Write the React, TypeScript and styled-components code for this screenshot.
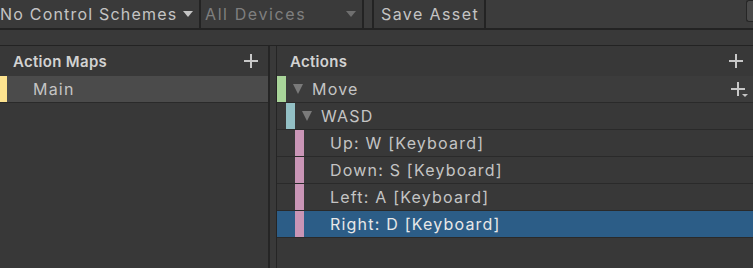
import React from "react";
import styled, { createGlobalStyle } from "styled-components";

const GlobalStyle = createGlobalStyle`
    html, body {
        margin: 0;
        padding: 0;
        background: #383838;
        overflow: hidden;
    }
    body {
        font-family: Inter, "Noto Sans", "DejaVu Sans", sans-serif;
        color: #c4c4c4;
    }
`;

const Window = styled.div`
    display: flex;
    flex-direction: column;
    width: 753px;
    height: 268px;
    background: #383838;
`;

const Toolbar = styled.div`
    display: flex;
    align-items: stretch;
    height: 28px;
    background: #3c3c3c;
    border-bottom: 2px solid #232323;
    font-size: 16px;
    letter-spacing: 1.2px;
`;

const Dropdown = styled.div<{ width: number; disabled?: boolean }>`
    display: flex;
    align-items: center;
    justify-content: space-between;
    box-sizing: border-box;
    width: ${(props): number => props.width}px;
    padding: 0 6px 0 4px;
    background: #3a3a3a;
    border-right: 2px solid #232323;
    color: ${(props): string => (props.disabled ? "#7f7f7f" : "#c4c4c4")};
    white-space: nowrap;
    overflow: hidden;

    &:first-child {
        padding-left: 0;
        padding-right: 6px;
    }
`;

const DropdownText = styled.span<{ spread?: boolean }>`
    letter-spacing: ${(props): string => (props.spread ? "1.6px" : "inherit")};
`;

const Caret = styled.span<{ disabled?: boolean }>`
    flex: none;
    width: 0;
    height: 0;
    border-left: 5px solid transparent;
    border-right: 5px solid transparent;
    border-top: 6px solid ${(props): string => (props.disabled ? "#6f6f6f" : "#c4c4c4")};
`;

const Spacer = styled.div<{ width?: number }>`
    width: ${(props): string => (props.width ? `${props.width}px` : "auto")};
    flex: ${(props): string => (props.width ? "none" : "1")};
`;

const ToolButton = styled.div`
    display: flex;
    align-items: center;
    box-sizing: border-box;
    width: 114px;
    padding-left: 7px;
    background: #3a3a3a;
    border-left: 2px solid #232323;
    border-right: 2px solid #232323;
    white-space: nowrap;
    letter-spacing: 1.4px;
`;

const SearchField = styled.div`
    width: 6px;
    height: 20px;
    background: #4a4a4a;
    border: 1px solid #262626;
    border-right: none;
    border-radius: 3px 0 0 3px;
`;

const Band = styled.div`
    height: 15px;
    background: #393939;
    border-bottom: 1px solid #232323;
`;

const Panels = styled.div`
    display: flex;
    flex: 1;
    min-height: 0;
`;

const Panel = styled.div<{ width?: number }>`
    display: flex;
    flex-direction: column;
    width: ${(props): string => (props.width ? `${props.width}px` : "auto")};
    flex: ${(props): string => (props.width ? "none" : "1")};
    background: #383838;
`;

const Splitter = styled.div`
    width: 6px;
    background: #393939;
    border-left: 2px solid #252525;
    border-right: 1px solid #252525;
`;

const PanelHeader = styled.div`
    display: flex;
    align-items: center;
    justify-content: space-between;
    height: 30px;
    padding: 0 10px 0 13px;
    background: #383838;
    font-size: 15px;
    font-weight: 600;
    letter-spacing: 0.3px;
    color: #d2d2d2;
`;

const Row = styled.div<{ selected?: boolean; tone?: "grey" | "hover" }>`
    display: flex;
    align-items: stretch;
    height: 26px;
    border-bottom: 1px solid #2a2a2a;
    font-size: 16px;
    letter-spacing: 1.2px;
    color: ${(props): string => (props.selected ? "#e8e8e8" : "#c4c4c4")};
    background: ${(props): string =>
        props.selected ? "#2c5d87" : props.tone === "grey" ? "#4b4b4b" : props.tone === "hover" ? "#3c3c3c" : "transparent"};
`;

const Strip = styled.div<{ color: string; indent: number; size?: number }>`
    width: ${(props): number => props.size ?? 9}px;
    margin-left: ${(props): number => props.indent}px;
    background: ${(props): string => props.color};
    flex: none;
`;

const Label = styled.div<{ gap: number }>`
    display: flex;
    align-items: center;
    flex: 1;
    padding-left: ${(props): number => props.gap}px;
    white-space: nowrap;
`;

const Fold = styled.span`
    width: 0;
    height: 0;
    margin-right: 9px;
    border-left: 5.5px solid transparent;
    border-right: 5.5px solid transparent;
    border-top: 10px solid #7a7a7a;
`;

const AddButton = styled.div`
    position: relative;
    display: flex;
    align-items: center;
    padding-right: 8px;
`;

const MenuMark = styled.span`
    position: absolute;
    right: 5px;
    bottom: 5px;
    width: 0;
    height: 0;
    border-left: 3px solid transparent;
    border-right: 3px solid transparent;
    border-top: 3px solid #c4c4c4;
`;

const Plus: React.FC = (): React.ReactElement => (
    <svg width="14" height="14" viewBox="0 0 14 14">
        <rect x="6" y="0" width="2" height="14" fill="#c8c8c8" />
        <rect x="0" y="6" width="14" height="2" fill="#c8c8c8" />
    </svg>
);

type Item = {
    label: string;
    color: string;
    depth: number;
    foldable?: boolean;
    selected?: boolean;
    hover?: boolean;
    menu?: boolean;
};

const items: Item[] = [
    { label: "Move", color: "#a9d59a", depth: 0, foldable: true, hover: true, menu: true },
    { label: "WASD", color: "#93c0c5", depth: 1, foldable: true },
    { label: "Up: W [Keyboard]", color: "#c995b6", depth: 2 },
    { label: "Down: S [Keyboard]", color: "#c995b6", depth: 2 },
    { label: "Left: A [Keyboard]", color: "#c995b6", depth: 2 },
    { label: "Right: D [Keyboard]", color: "#c995b6", depth: 2, selected: true }
];

const App: React.FC = (): React.ReactElement => {
    return (
        <Window>
            <GlobalStyle />
            <Toolbar>
                <Dropdown width={201}>
                    <DropdownText>No Control Schemes</DropdownText>
                    <Caret />
                </Dropdown>
                <Dropdown width={163} disabled>
                    <DropdownText spread>All Devices</DropdownText>
                    <Caret disabled />
                </Dropdown>
                <Spacer width={8} />
                <ToolButton>Save Asset</ToolButton>
                <Spacer />
                <SearchField />
            </Toolbar>
            <Band />
            <Panels>
                <Panel width={268}>
                    <PanelHeader>
                        Action Maps
                        <Plus />
                    </PanelHeader>
                    <Row tone="grey">
                        <Strip color="#fde38f" indent={0} size={7} />
                        <Label gap={26}>Main</Label>
                    </Row>
                </Panel>
                <Splitter />
                <Panel>
                    <PanelHeader>
                        Actions
                        <Plus />
                    </PanelHeader>
                    {items.map((item) => (
                        <Row key={item.label} selected={item.selected} tone={item.hover ? "hover" : undefined}>
                            <Strip color={item.color} indent={item.depth * 9} />
                            <Label gap={item.foldable ? 7 : 26}>
                                {item.foldable && <Fold />}
                                {item.label}
                            </Label>
                            {item.menu && (
                                <AddButton>
                                    <Plus />
                                    <MenuMark />
                                </AddButton>
                            )}
                        </Row>
                    ))}
                </Panel>
            </Panels>
        </Window>
    );
};

export default App;
